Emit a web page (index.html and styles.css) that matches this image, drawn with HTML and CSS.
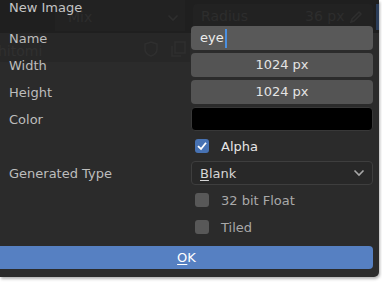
FILE: index.html
```html
<!DOCTYPE html>
<html lang="en">
<head>
    <meta charset="UTF-8">
    <title>New Image</title>
    <link rel="stylesheet" href="styles.css">
</head>
<body>

    <div class="dialog">
        <!-- ui behind the popup, seen through it -->
        <div class="ghost">
            <div class="ghost-top"></div>
            <div class="ghost-mix">Mix
                <svg class="ghost-chev" width="12" height="8" viewBox="0 0 12 8"><path d="M1.5 1.5 L6 6 L10.5 1.5" fill="none" stroke="#2e2e2e" stroke-width="1.6"/></svg>
            </div>
            <div class="ghost-radius"><span>Radius</span><span class="ghost-val">36 px</span>
                <svg class="ghost-pen" width="14" height="14" viewBox="0 0 14 14"><path d="M2 12 L3 9 L10 2 L12 4 L5 11 Z" fill="none" stroke="#2e2e2e" stroke-width="1.5"/></svg>
            </div>
            <div class="ghost-blue"></div>
            <div class="ghost-row">
                <span class="ghost-name">hitomi</span>
                <div class="ghost-icons">
                    <svg width="16" height="18" viewBox="0 0 16 18"><path d="M8 2 L14 4 L14 9 C14 13 11 15 8 16 C5 15 2 13 2 9 L2 4 Z" fill="none" stroke="#2f2f2f" stroke-width="1.5"/></svg>
                    <svg width="18" height="18" viewBox="0 0 18 18"><rect x="6" y="2" width="10" height="11" fill="none" stroke="#2f2f2f" stroke-width="1.5"/><path d="M3 6 L3 16 L12 16" fill="none" stroke="#2f2f2f" stroke-width="1.5"/></svg>
                </div>
            </div>
        </div>

        <div class="content">
            <div class="title">New Image</div>

            <div class="row">
                <div class="label">Name</div>
                <div class="field field-text">eye<span class="cursor"></span></div>
            </div>
            <div class="row">
                <div class="label">Width</div>
                <div class="field">1024 px</div>
            </div>
            <div class="row">
                <div class="label">Height</div>
                <div class="field">1024 px</div>
            </div>
            <div class="row">
                <div class="label">Color</div>
                <div class="swatch"></div>
            </div>
            <div class="row">
                <div class="label"></div>
                <div class="check-line">
                    <span class="box box-on">
                        <svg width="14" height="14" viewBox="0 0 14 14"><path d="M3 7.2 L6 10 L11 3.8" fill="none" stroke="#fff" stroke-width="1.8"/></svg>
                    </span>
                    <span class="check-label on">Alpha</span>
                </div>
            </div>
            <div class="row">
                <div class="label">Generated Type</div>
                <div class="select">
                    <span><u>B</u>lank</span>
                    <svg width="12" height="8" viewBox="0 0 12 8"><path d="M1.5 1.5 L6 6 L10.5 1.5" fill="none" stroke="#a8a8a8" stroke-width="1.6"/></svg>
                </div>
            </div>
            <div class="row">
                <div class="label"></div>
                <div class="check-line">
                    <span class="box"></span>
                    <span class="check-label">32 bit Float</span>
                </div>
            </div>
            <div class="row">
                <div class="label"></div>
                <div class="check-line">
                    <span class="box"></span>
                    <span class="check-label">Tiled</span>
                </div>
            </div>

            <div class="ok"><u>O</u>K</div>
        </div>
    </div>

</body>
</html>
```

FILE: styles.css
```css
*{
    padding: 0;
    margin: 0;
    box-sizing: border-box;
}
body{
    background-color: #ffffff;
    font-family: "DejaVu Sans", sans-serif;
    font-size: 13px;
    width: 382px;
    height: 287px;
    overflow: hidden;
}
.dialog{
    position: relative;
    width: 379px;
    height: 277px;
    background-color: #2b2b2b;
    border-radius: 0 0 5px 0;
    box-shadow: 1px 2px 3px rgba(0,0,0,0.3);
}

/* ghost layer */
.ghost{
    position: absolute;
    top: 0;
    left: 0;
    width: 379px;
    height: 62px;
    color: #2d2d2d;
    font-size: 14px;
}
.ghost-top{
    position: absolute;
    left: 0;
    top: 0;
    width: 379px;
    height: 33px;
    background-color: #1f1f1f;
}
.ghost-mix{
    position: absolute;
    left: 55px;
    top: 0;
    width: 130px;
    height: 31px;
    background-color: #222222;
    padding: 9px 0 0 13px;
}
.ghost-chev{
    position: absolute;
    left: 112px;
    top: 14px;
}
.ghost-radius{
    position: absolute;
    left: 193px;
    top: 4px;
    width: 180px;
    height: 26px;
    background-color: #222222;
    border-radius: 4px;
    padding: 4px 0 0 8px;
}
.ghost-val{
    position: absolute;
    left: 112px;
    top: 4px;
}
.ghost-pen{
    position: absolute;
    left: 156px;
    top: 6px;
}
.ghost-blue{
    position: absolute;
    left: 376px;
    top: 4px;
    width: 3px;
    height: 26px;
    background-color: #2a3c58;
}
.ghost-row{
    position: absolute;
    left: 0;
    top: 33px;
    width: 190px;
    height: 29px;
    background-color: #272727;
}
.ghost-name{
    position: absolute;
    left: -2px;
    top: 10px;
    color: #303030;
}
.ghost-icons{
    position: absolute;
    left: 143px;
    top: 7px;
    display: flex;
    gap: 10px;
}

/* dialog content */
.content{
    position: relative;
    padding: 0 6px 0 9px;
    display: flex;
    flex-direction: column;
    gap: 3px;
}
.title{
    height: 23px;
    line-height: 16px;
    color: #c4c4c4;
}
.row{
    display: grid;
    grid-template-columns: 182px 182px;
    height: 24px;
    align-items: center;
}
.label{
    color: #bdbdbd;
}
.field{
    height: 24px;
    line-height: 24px;
    background-color: #545454;
    border-radius: 4px;
    text-align: center;
    color: #e4e4e4;
}
.field-text{
    text-align: left;
    padding-left: 9px;
    background-color: #595959;
    color: #ececec;
    display: flex;
    align-items: center;
}
.cursor{
    display: inline-block;
    width: 2px;
    height: 19px;
    background-color: #4a8fe0;
    margin-left: 1px;
}
.swatch{
    height: 24px;
    background-color: #000000;
    border: 1px solid #383838;
    border-radius: 4px;
}
.check-line{
    display: flex;
    align-items: center;
    padding-left: 4px;
}
.box{
    width: 14px;
    height: 14px;
    border-radius: 3px;
    background-color: #585858;
    margin-right: 12px;
    display: flex;
}
.box-on{
    background-color: #4772b3;
}
.check-label{
    color: #a9a9a9;
}
.check-label.on{
    color: #e6e6e6;
}
.select{
    height: 24px;
    border: 1px solid #3e3e3e;
    border-radius: 4px;
    background-color: #282828;
    color: #d6d6d6;
    display: flex;
    justify-content: space-between;
    align-items: center;
    padding: 0 7px 0 8px;
}
.ok{
    margin: 4px 0 0 -9px;
    width: 373px;
    height: 23px;
    line-height: 23px;
    background-color: #5680c2;
    border-radius: 0 4px 4px 0;
    text-align: center;
    color: #ffffff;
}
u{
    text-underline-offset: 2px;
}
```
